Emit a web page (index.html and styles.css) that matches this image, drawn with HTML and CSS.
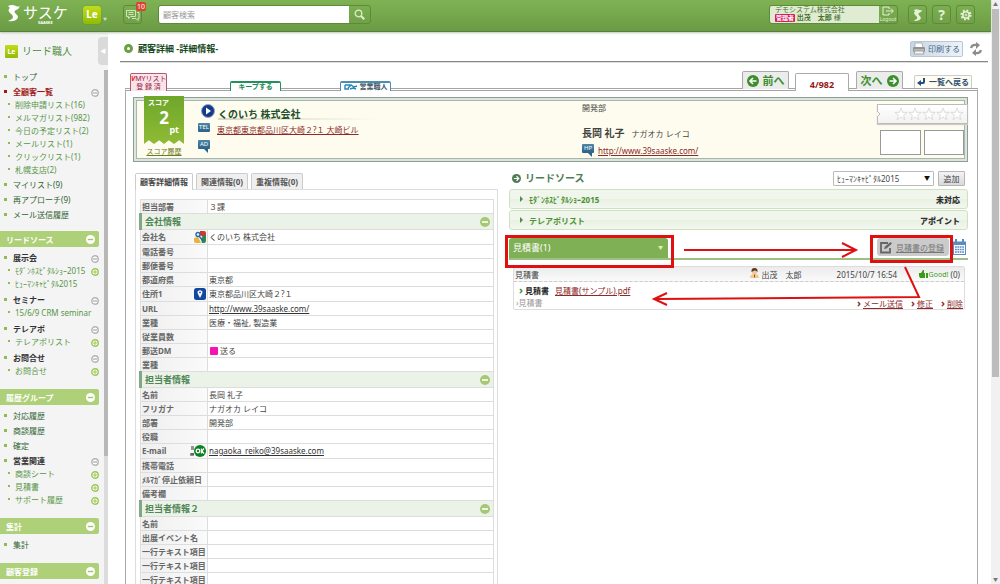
FILE: index.html
```html
<!DOCTYPE html>
<html lang="ja">

<head>
    <meta charset="UTF-8">
    <meta name="viewport" content="width=device-width, initial-scale=1.0">
    <title>顧客詳細 -詳細情報-</title>
    <link rel="stylesheet" href="styles.css">
</head>

<body>
    <!-- Shared icons -->
    <svg class="sprites" aria-hidden="true">
        <symbol id="ninja" viewBox="0 0 14 18">
            <path d="M1 2 Q5 0 9 2 Q11 3 13 2 Q12 5 9 6 Q6 7 9 10 Q13 13 9 16 Q5 18 1 17 Q6 15 6 13 Q6 11 3 9 Q0 6 3 4 Z" fill="currentColor" />
        </symbol>
        <symbol id="minus" viewBox="0 0 10 10">
            <circle cx="5" cy="5" r="5" fill="currentColor" />
            <path d="M2 5h6" stroke="var(--bar, #fff)" stroke-width="1.6" />
        </symbol>
        <symbol id="minus-line" viewBox="0 0 8 8">
            <circle cx="4" cy="4" r="3.2" fill="#fff" stroke="currentColor" stroke-width="1.4" />
            <path d="M2 4h4" stroke="currentColor" stroke-width="1.4" />
        </symbol>
        <symbol id="plus-line" viewBox="0 0 8 8">
            <circle cx="4" cy="4" r="3.2" fill="#fff" stroke="currentColor" stroke-width="1.4" />
            <path d="M2 4h4M4 2v4" stroke="currentColor" />
        </symbol>
        <symbol id="go" viewBox="0 0 12 12">
            <circle cx="6" cy="6" r="6" fill="currentColor" />
            <path d="M2.5 6h6M6 3l3 3-3 3" fill="none" stroke="#fff" stroke-width="1.6" />
        </symbol>
        <symbol id="star" viewBox="0 0 14 14">
            <path d="M7 1l1.6 4.3 4.6.1-3.6 2.8 1.3 4.4L7 10l-3.9 2.6 1.3-4.4L.8 5.4l4.6-.1z" fill="#fff" stroke="#d4d4d4" stroke-width=".8" />
        </symbol>
    </svg>

    <div class="window">
        <header class="topbar">
            <a href="#" class="logo" aria-label="サスケ">
                <svg class="logo-mark"><use href="#ninja" /></svg>
                <span class="logo-name">サスケ<small>SAASKE</small></span>
            </a>
            <button type="button" class="product">Le</button>
            <span class="caret">▼</span>
            <button type="button" class="bar-button messages" aria-label="メッセージ">
                <svg width="14" height="12" viewBox="0 0 14 12" fill="none" stroke="#cfe6b8">
                    <path d="M.5 1.5h9v6h-5l-2 2v-2h-2zM2.5 3.5h5M2.5 5.5h5" />
                    <path d="M11 3.5h2v6h-1v2l-2-2H6" />
                </svg>
                <span class="count">10</span>
            </button>
            <form class="search">
                <input type="text" placeholder="顧客検索" aria-label="顧客検索">
                <button type="button" aria-label="検索">
                    <svg width="11" height="11" viewBox="0 0 11 11" fill="none" stroke="#dceec8">
                        <circle cx="4.5" cy="4.5" r="3.3" stroke-width="1.3" />
                        <path d="M7 7l3.3 3.3" stroke-width="2" />
                    </svg>
                </button>
            </form>
            <div class="account">
                <div class="account-info">
                    <div>デモシステム株式会社</div>
                    <div><span class="role">管理者</span> <b>出茂　太郎</b> 様</div>
                </div>
                <button type="button" class="logout">
                    <svg width="12" height="10" viewBox="0 0 12 10" fill="none" stroke="#e4f2d6">
                        <path d="M7 3V1H1v8h6V7M4 5h7M9 2.5L11.3 5 9 7.5" />
                    </svg>
                    Logout
                </button>
            </div>
            <button type="button" class="bar-button" aria-label="サスケ"><svg width="10" height="14"><use href="#ninja" /></svg></button>
            <button type="button" class="bar-button help">?</button>
            <button type="button" class="bar-button" aria-label="設定">
                <svg width="12" height="12" viewBox="0 0 12 12" fill="none" stroke="currentColor">
                    <circle cx="6" cy="6" r="4.6" stroke-width="2" stroke-dasharray="1.8 1.8" />
                    <circle cx="6" cy="6" r="3.2" stroke-width="1.6" />
                    <circle cx="6" cy="6" r="1" />
                </svg>
            </button>
        </header>

        <div class="page">
            <aside class="sidebar">
                <button type="button" class="collapse" aria-label="閉じる">◀</button>
                <a href="#" class="side-title"><span class="le">Le</span>リード職人</a>
                <div class="side-scroll">
                    <nav class="side-menu">
                        <ul class="first">
                            <li><a href="#">トップ</a></li>
                            <li class="current"><a href="#">全顧客一覧</a><svg class="fold"><use href="#minus-line" /></svg>
                                <ul>
                                    <li><a href="#">削除申請リスト(16)</a></li>
                                    <li><a href="#">メルマガリスト(982)</a></li>
                                    <li><a href="#">今日の予定リスト(2)</a></li>
                                    <li><a href="#">メールリスト(1)</a></li>
                                    <li><a href="#">クリックリスト(1)</a></li>
                                    <li><a href="#">札幌支店(2)</a></li>
                                </ul>
                            </li>
                            <li><a href="#">マイリスト(9)</a></li>
                            <li><a href="#">再アプローチ(9)</a></li>
                            <li><a href="#">メール送信履歴</a></li>
                        </ul>
                        <h2>リードソース<svg><use href="#minus" /></svg></h2>
                        <ul>
                            <li class="group"><a href="#">展示会</a><svg class="fold"><use href="#minus-line" /></svg>
                                <ul>
                                    <li><a href="#">ﾓﾀﾞﾝﾎｽﾋﾟﾀﾙｼｮｰ2015</a><svg class="add"><use href="#plus-line" /></svg></li>
                                    <li><a href="#">ﾋｭｰﾏﾝｷｬﾋﾟﾀﾙ2015</a></li>
                                </ul>
                            </li>
                            <li class="group"><a href="#">セミナー</a><svg class="fold"><use href="#minus-line" /></svg>
                                <ul>
                                    <li><a href="#">15/6/9 CRM seminar</a></li>
                                </ul>
                            </li>
                            <li class="group"><a href="#">テレアポ</a><svg class="fold"><use href="#minus-line" /></svg>
                                <ul>
                                    <li><a href="#">テレアポリスト</a><svg class="add"><use href="#plus-line" /></svg></li>
                                </ul>
                            </li>
                            <li class="group"><a href="#">お問合せ</a><svg class="fold"><use href="#minus-line" /></svg>
                                <ul>
                                    <li><a href="#">お問合せ</a><svg class="add"><use href="#plus-line" /></svg></li>
                                </ul>
                            </li>
                        </ul>
                        <h2>履歴グループ<svg><use href="#minus" /></svg></h2>
                        <ul>
                            <li><a href="#">対応履歴</a></li>
                            <li><a href="#">商談履歴</a></li>
                            <li><a href="#">確定</a></li>
                            <li class="group"><a href="#">営業関連</a><svg class="fold"><use href="#minus-line" /></svg>
                                <ul>
                                    <li><a href="#">商談シート</a><svg class="add"><use href="#plus-line" /></svg></li>
                                    <li><a href="#">見積書</a><svg class="add"><use href="#plus-line" /></svg></li>
                                    <li><a href="#">サポート履歴</a><svg class="add"><use href="#plus-line" /></svg></li>
                                </ul>
                            </li>
                        </ul>
                        <h2>集計<svg><use href="#minus" /></svg></h2>
                        <ul>
                            <li><a href="#">集計</a></li>
                        </ul>
                        <h2>顧客登録<svg><use href="#minus" /></svg></h2>
                    </nav>
                    <div class="side-track"><div class="side-thumb"></div></div>
                </div>
            </aside>

            <main>
                <div class="title-row">
                    <h1><span class="ring"></span>顧客詳細 -詳細情報-</h1>
                    <button type="button" class="print">
                        <svg width="14" height="13" viewBox="0 0 14 13">
                            <path d="M3 1h7l1 5H3z" fill="#fff" stroke="#9aa7b5" stroke-width=".8" />
                            <rect x="1" y="5" width="12" height="5" rx="1" fill="#8f9499" />
                            <path d="M2 8h10" stroke="#e6dcc6" />
                            <path d="M3 9h8l1 3H2z" fill="#f4f4f4" stroke="#999" stroke-width=".8" />
                        </svg>
                        印刷する
                    </button>
                    <button type="button" class="refresh" aria-label="更新">
                        <svg width="14" height="14" viewBox="0 0 14 14" fill="none" stroke="#8c8c8c" stroke-width="2.2">
                            <path d="M2 6 Q3 2 8 3" /><path d="M12 8 Q11 12 6 11" />
                            <path d="M7 0l4 3-4 4zM7 14l-4-3 4-4z" fill="#8c8c8c" stroke="none" />
                        </svg>
                    </button>
                </div>

                <nav class="tabs">
                    <a href="#" class="tab my-list"><span><i>V</i>MYリスト</span><span>登 録 済</span></a>
                    <a href="#" class="tab keep">キープする</a>
                    <a href="#" class="tab sales">
                        <svg width="14" height="8" viewBox="0 0 14 8" fill="none" stroke="#2a86b8">
                            <path d="M1 2h5M1 2v4h4M4 5l3-3 3 2 3-1M6 6l3-1 3 1" stroke-width="1.4" />
                        </svg>営業職人</a>
                    <a href="#" class="tab pager prev"><svg class="flip"><use href="#go" /></svg>前へ</a>
                    <span class="tab position">4/982</span>
                    <a href="#" class="tab pager next">次へ<svg><use href="#go" /></svg></a>
                    <a href="#" class="tab back">
                        <svg width="8" height="8" viewBox="0 0 8 8"><path d="M7 0v4q0 1-1 1H3" fill="none" stroke="#1f4e86" stroke-width="2" /><path d="M0 5l4-3v6z" fill="#1f4e86" /></svg>一覧へ戻る</a>
                </nav>

                <div class="panel">
                    <section class="summary">
                        <div class="score">
                            <div class="ribbon"><span>スコア</span><strong>2</strong><em>pt</em></div>
                            <a href="#">スコア履歴</a>
                        </div>
                        <div class="company">
                            <div class="company-name">
                                <svg width="14" height="14" viewBox="0 0 14 14">
                                    <circle cx="7" cy="7" r="6.5" fill="#163a86" stroke="#8fa6cf" />
                                    <path d="M5 3.5l5 3.5-5 3.5z" fill="#fff" />
                                </svg>
                                <h2>くのいち 株式会社</h2>
                            </div>
                            <div class="contact"><span class="chip">TEL</span><a href="#">東京都東京都品川区大崎２?１ 大崎ビル</a></div>
                            <div class="contact"><span class="chip bubble">AD</span></div>
                        </div>
                        <div class="person">
                            <p>開発部</p>
                            <div class="person-name"><strong>長岡 礼子</strong>ナガオカ レイコ</div>
                            <div class="contact"><span class="chip bubble">HP</span><a href="#">http://www.39saaske.com/</a></div>
                        </div>
                        <div class="rating">
                            <div class="stars">
                                <svg class="notch" viewBox="0 0 4 6"><path d="M0 0l3 3-3 3" fill="#fefcee" stroke="#bbb" /></svg>
                                <svg><use href="#star" /></svg><svg><use href="#star" /></svg><svg><use href="#star" /></svg><svg><use href="#star" /></svg><svg><use href="#star" /></svg>
                            </div>
                            <div class="photos"><div></div><div></div></div>
                        </div>
                    </section>

                    <div class="columns">
                        <section class="detail">
                            <nav class="detail-tabs">
                                <a href="#" class="active">顧客詳細情報</a>
                                <a href="#">関連情報(0)</a>
                                <a href="#">重複情報(0)</a>
                            </nav>
                            <div class="detail-body">
                                <table>
                                    <tr><th>担当部署</th><td>３課</td></tr>
                                    <tr class="section"><th colspan="2"><div>会社情報<svg><use href="#minus" /></svg></div></th></tr>
                                    <tr class="tall"><th><div>会社名
                                        <svg width="12" height="12" viewBox="0 0 12 12">
                                            <rect width="12" height="12" rx="2" fill="#f4f6f2" />
                                            <path d="M6 0h4q2 0 2 2v3L9 6 6 4z" fill="#cf3a2c" />
                                            <path d="M9 5l3-1v6q0 2-2 2H8L7 8z" fill="#2b8a44" />
                                            <path d="M0 7l4-1 3 6H2q-2 0-2-2z" fill="#e8b33a" />
                                            <circle cx="4" cy="3.5" r="2" fill="none" stroke="#2c62b0" stroke-width="1.4" />
                                            <path d="M5 5l4 5" stroke="#2c62b0" stroke-width="1.4" />
                                        </svg></div></th><td>くのいち 株式会社</td></tr>
                                    <tr><th>電話番号</th><td></td></tr>
                                    <tr><th>郵便番号</th><td></td></tr>
                                    <tr><th>都道府県</th><td>東京都</td></tr>
                                    <tr class="tall"><th><div>住所1
                                        <svg width="12" height="12" viewBox="0 0 12 12">
                                            <rect width="12" height="12" rx="2.5" fill="#1247a0" />
                                            <path d="M6 10L3.8 5.5a2.4 2.4 0 1 1 4.4 0z" fill="#fff" />
                                            <circle cx="6" cy="4.4" r=".9" fill="#1247a0" />
                                        </svg></div></th><td>東京都品川区大崎２?１</td></tr>
                                    <tr><th>URL</th><td><a href="#">http://www.39saaske.com/</a></td></tr>
                                    <tr><th>業種</th><td>医療・福祉, 製造業</td></tr>
                                    <tr><th>従業員数</th><td></td></tr>
                                    <tr><th>郵送DM</th><td><span class="swatch"></span>送る</td></tr>
                                    <tr><th>業種</th><td></td></tr>
                                    <tr class="section"><th colspan="2"><div>担当者情報<svg><use href="#minus" /></svg></div></th></tr>
                                    <tr><th>名前</th><td>長岡 礼子</td></tr>
                                    <tr><th>フリガナ</th><td>ナガオカ レイコ</td></tr>
                                    <tr><th>部署</th><td>開発部</td></tr>
                                    <tr><th>役職</th><td></td></tr>
                                    <tr class="tall"><th><div>E-mail
                                        <svg width="16" height="12" viewBox="0 0 16 12">
                                            <path d="M1 2h3M1 4h3M1 8v3M3 8v3M1 9h3" stroke="#333" />
                                            <circle cx="10" cy="6" r="6" fill="#0b8020" />
                                            <circle cx="8" cy="6" r="1.8" fill="none" stroke="#fff" stroke-width="1.3" />
                                            <path d="M11.4 3.5v5M14 3.5L11.8 6 14 8.5" fill="none" stroke="#fff" stroke-width="1.2" />
                                        </svg></div></th><td><a href="#">nagaoka_reiko@39saaske.com</a></td></tr>
                                    <tr><th>携帯電話</th><td></td></tr>
                                    <tr><th>ﾒﾙﾏｶﾞ停止依頼日</th><td></td></tr>
                                    <tr><th>備考欄</th><td></td></tr>
                                    <tr class="section"><th colspan="2"><div>担当者情報２<svg><use href="#minus" /></svg></div></th></tr>
                                    <tr><th>名前</th><td></td></tr>
                                    <tr><th>出展イベント名</th><td></td></tr>
                                    <tr><th>一行テキスト項目</th><td></td></tr>
                                    <tr><th>一行テキスト項目</th><td></td></tr>
                                    <tr><th>一行テキスト項目</th><td></td></tr>
                                </table>
                            </div>
                        </section>

                        <section class="sources">
                            <div class="source-head">
                                <h2><svg><use href="#go" /></svg>リードソース</h2>
                                <div class="select">
                                    <select aria-label="リードソース">
                                        <option>ﾋｭｰﾏﾝｷｬﾋﾟﾀﾙ2015</option>
                                    </select>
                                </div>
                                <button type="button" class="add-button">追加</button>
                            </div>
                            <a href="#" class="source"><span>ﾓﾀﾞﾝﾎｽﾋﾟﾀﾙｼｮｰ2015</span><b>未対応</b></a>
                            <a href="#" class="source"><span>テレアポリスト</span><b>アポイント</b></a>

                            <div class="estimate-head">
                                <button type="button" class="estimate-tab">見積書(1)<span>▼</span></button>
                                <a href="#" class="register">
                                    <svg width="14" height="13" viewBox="0 0 14 13" fill="none" stroke="#666" stroke-width="1.8">
                                        <path d="M9 2H2v9.5h9V7" /><path d="M5 8l1-2.5L11.5 1 13 2.5 7.5 7.5z" fill="#666" stroke="none" />
                                    </svg><span>見積書の登録</span></a>
                                <a href="#" class="calendar" aria-label="カレンダー">
                                    <svg width="13" height="16" viewBox="0 0 13 16">
                                        <rect x=".5" y="3" width="12" height="12.5" fill="#fff" stroke="#5b8cc0" />
                                        <path d="M0 3h13v3H0z" fill="#5b8cc0" />
                                        <path d="M3 0v4M10 0v4" stroke="#5b8cc0" stroke-width="2" />
                                        <path d="M2 8h9M2 10.5h9M2 13h9" stroke="#5b8cc0" stroke-width="1.5" stroke-dasharray="1.8 .6" />
                                    </svg>
                                </a>
                            </div>

                            <article class="record">
                                <div class="record-head">
                                    <span class="kind">見積書</span>
                                    <span class="owner">
                                        <svg width="9" height="10" viewBox="0 0 9 10">
                                            <path d="M0 10q0-4 4.5-4T9 10z" fill="#e9cf8a" />
                                            <circle cx="4.5" cy="4" r="2.6" fill="#f3c9a0" />
                                            <path d="M1.5 4Q1 0 4.5 0T7.5 4Q6 2 4.5 2.5T1.5 4z" fill="#5a3a22" />
                                            <path d="M4.5 6.5v3" stroke="#c33" />
                                        </svg>出茂　太郎</span>
                                    <time>2015/10/7 16:54</time>
                                    <span class="good">
                                        <svg width="9" height="8" viewBox="0 0 9 8" fill="#3c9a1c"><path d="M0 3h2l2-3 1 0v3h1v5H1L0 6zM7 3h2v5H7z" /></svg>Good!</span>
                                    <span>(0)</span>
                                </div>
                                <div class="record-body">
                                    <p><span class="arrow">›</span><b>見積書</b><a href="#">見積書(サンプル).pdf</a></p>
                                    <div class="record-foot">
                                        <span class="muted">›見積書</span>
                                        <span class="actions"><a href="#">メール送信</a><a href="#">修正</a><a href="#">削除</a></span>
                                    </div>
                                </div>
                            </article>

                            <!-- Red guide marks over the estimate area -->
                            <svg class="guide" width="465" height="80" viewBox="505 232 465 80" fill="none" stroke="#e01010">
                                <rect x="506.5" y="236.5" width="166" height="30" stroke-width="3" />
                                <rect x="871.5" y="236.5" width="80" height="25" stroke-width="3" />
                                <path d="M684 250h172M842 243l14 7-14 7" stroke-width="2" />
                                <path d="M905 267l14 30-264 2M667 293l-13 6 13 6" stroke-width="2" />
                            </svg>
                        </section>
                    </div>
                </div>
            </main>
        </div>
    </div>
    <div class="scrollbar"><span>▲</span><div class="thumb"></div><span>▼</span></div>
</body>

</html>
```
FILE: styles.css
```css
/* Global Styles */
* {
    box-sizing: border-box;
}

body {
    margin: 0;
    display: flex;
    height: 100vh;
    overflow: hidden;
    background-color: #fff;
    color: #444;
    font-family: "Noto Sans", "Noto Sans CJK JP", sans-serif;
    font-size: 8px;
    line-height: 13px;
}

h1, h2, p, ul {
    margin: 0;
    padding: 0;
}

ul {
    list-style: none;
}

a {
    color: inherit;
    text-decoration: none;
}

button, input, select {
    font: inherit;
    color: inherit;
    margin: 0;
    padding: 0;
    border: none;
    background: none;
}

svg {
    flex: none;
}

.sprites {
    position: absolute;
    width: 0;
    height: 0;
}

.window {
    flex: 1;
    min-width: 0;
    display: flex;
    flex-direction: column;
}

/* Top Bar */
.topbar {
    flex: none;
    height: 32px;
    display: flex;
    align-items: center;
    padding: 0 16px 2px 7px;
    background: linear-gradient(#7fb254, #6b9b44);
    border-bottom: 1px solid #57803a;
    box-shadow: 0 1px 2px #b9c9ae;
    color: #fff;
    z-index: 1;
}

.logo {
    display: flex;
    gap: 2px;
    width: 76px;
}

.logo-mark {
    width: 14px;
    height: 18px;
}

.logo-name {
    font-size: 15px;
    line-height: 16px;
}

.logo-name small {
    display: block;
    font-size: 4px;
    line-height: 5px;
    font-weight: bold;
    text-align: center;
}

.product, .le {
    background: linear-gradient(#c4dc18, #8fbc04);
    border-radius: 3px;
    color: #fff;
    font-weight: bold;
    text-align: center;
}

.product {
    width: 18px;
    height: 18px;
    font-size: 10px;
    box-shadow: 0 0 1px #4c7426;
}

.caret {
    width: 22px;
    padding: 10px 0 0 2px;
    font-size: 4px;
    line-height: 4px;
    color: #cfe0c0;
}

.bar-button {
    width: 19px;
    height: 19px;
    margin-left: 5px;
    display: flex;
    align-items: center;
    justify-content: center;
    border: 1px solid #5d8b3a;
    border-radius: 3px;
    color: #e4f2d6;
}

.messages {
    position: relative;
    margin-left: 0;
}

.count {
    position: absolute;
    top: -4px;
    right: -5px;
    padding: 0 1px;
    border-radius: 2px;
    background-color: #d8452e;
    color: #fff;
    font-size: 7px;
    line-height: 9px;
}

.help {
    font-size: 14px;
    font-weight: bold;
}

.search {
    display: flex;
    height: 19px;
    margin-left: 16px;
    border: 1px solid #5d8b3a;
    border-radius: 3px;
}

.search input {
    width: 190px;
    padding: 0 4px;
    background-color: #fff;
    border-radius: 2px 0 0 2px;
    color: #444;
}

.search input::placeholder {
    color: #999;
}

.search button {
    width: 21px;
    display: flex;
    align-items: center;
    justify-content: center;
}

.account {
    display: flex;
    height: 19px;
    margin: 0 5px 0 auto;
    border: 1px solid #5d8b3a;
    border-radius: 3px;
}

.account-info {
    width: 109px;
    padding-left: 5px;
    background-color: #dfecd2;
    border-radius: 2px 0 0 2px;
    color: #47712a;
    font-size: 7px;
    line-height: 8px;
}

.role {
    padding: 0 1px;
    border-radius: 1px;
    background-color: #d81b60;
    color: #fff;
    font-size: 6px;
    font-weight: bold;
}

.logout {
    width: 18px;
    display: flex;
    flex-direction: column;
    align-items: center;
    font-size: 5px;
    line-height: 6px;
    color: #e4f2d6;
}

.page {
    flex: 1;
    min-height: 0;
    display: flex;
}

/* Sidebar */
.sidebar {
    position: relative;
    flex: none;
    width: 108px;
    display: flex;
    flex-direction: column;
    background-color: #f4f4f4;
    color: #2e6332;
}

.collapse {
    position: absolute;
    top: 5px;
    right: 0;
    width: 10px;
    height: 28px;
    border-radius: 4px 0 0 4px;
    background-color: #dadada;
    color: #fff;
    font-size: 6px;
}

.side-title {
    display: flex;
    align-items: center;
    gap: 4px;
    height: 38px;
    padding-left: 5px;
    font-size: 10px;
    color: #4d8c3c;
}

.le {
    width: 13px;
    height: 13px;
    border-radius: 1px;
    font-size: 7px;
}

.side-scroll {
    flex: 1;
    min-height: 0;
    display: flex;
}

.side-menu {
    flex: 1;
    overflow: hidden;
}

.side-track {
    width: 4px;
    background-color: #dcdcdc;
}

.side-thumb {
    height: 75%;
    background-color: #b7b7b7;
}

.side-menu > ul {
    padding: 4px 5px 10px 0;
}

.side-menu > .first {
    padding-top: 0;
    padding-bottom: 8px;
}

.side-menu li {
    position: relative;
    padding-left: 13px;
    margin-bottom: 2px;
}

.side-menu .group + .group {
    margin-top: 3px;
}

.side-menu li::before {
    content: "";
    position: absolute;
    left: 4px;
    top: 5px;
    width: 3px;
    height: 3px;
    background-color: #8fbc50;
}

.side-menu li li {
    padding-left: 2px;
    margin-bottom: 0;
    color: #589448;
}

.side-menu li li::before {
    left: -5px;
    width: 2px;
    height: 2px;
}

.side-menu .current > a {
    color: #a01818;
    font-weight: bold;
}

.side-menu .current::before {
    background-color: #a01818;
}

.side-menu .group > a {
    color: #333;
    font-weight: bold;
}

.fold, .add {
    position: absolute;
    top: 4px;
    right: 0;
    width: 8px;
    height: 8px;
    color: #b4b4b4;
}

.add {
    color: #9cc653;
}

.side-menu h2 {
    display: flex;
    align-items: center;
    justify-content: space-between;
    height: 16px;
    margin: 0 5px 0 0;
    padding: 0 4px 0 6px;
    border-radius: 0 2px 2px 0;
    background-color: #aed078;
    color: #fff;
    font-size: 8px;
}

.side-menu h2 svg {
    width: 9px;
    height: 9px;
    --bar: #a3c668;
}

/* Main Area */
main {
    flex: 1;
    min-width: 0;
    padding: 4px 3px 0 12px;
}

.title-row {
    display: flex;
    align-items: center;
    height: 26px;
    padding-right: 5px;
    border-bottom: 1px solid #888;
    box-shadow: 0 1px 0 #ddd;
}

h1 {
    display: flex;
    align-items: center;
    gap: 5px;
    margin-right: auto;
    padding: 4px;
    font-size: 9px;
    color: #174a22;
}

.ring {
    width: 9px;
    height: 9px;
    border: 3px solid #6ba043;
    border-radius: 50%;
}

.print {
    display: flex;
    align-items: center;
    gap: 2px;
    height: 16px;
    padding: 0 2px 0 1px;
    border: 1px solid #b9c6d3;
    border-radius: 2px;
    background: linear-gradient(90deg, #c9d6e2, #eef3f8);
    color: #42658c;
}

.refresh {
    display: flex;
    margin-left: 6px;
}

/* Tabs above the panel */
.tabs {
    position: relative;
    display: flex;
    align-items: flex-end;
    height: 29px;
    margin: 0 16px -3px 5px;
    padding-left: 5px;
}

.tab {
    border: 1px solid #aaa;
    border-bottom: none;
    border-radius: 2px 2px 0 0;
    background-color: #fff;
    font-weight: bold;
}

.my-list {
    width: 37px;
    padding-top: 1px;
    border-color: #b35a72;
    background-color: #fbe3ea;
    color: #92243f;
    font-size: 7px;
    line-height: 8px;
    font-weight: normal;
}

.my-list span {
    display: block;
    text-align: center;
    white-space: nowrap;
}

.my-list i {
    color: #d22;
    font-weight: bold;
}

.keep, .sales {
    width: 51px;
    height: 10px;
    margin-left: 63px;
    border-color: #239060;
    border-top-width: 2px;
    color: #1c8a55;
    font-size: 7px;
    line-height: 8px;
    text-align: center;
}

.sales {
    display: flex;
    justify-content: center;
    gap: 2px;
    margin-left: 59px;
    border-color: #4d8eae;
    color: #44586a;
}

.pager {
    display: flex;
    align-items: center;
    justify-content: center;
    gap: 4px;
    width: 47px;
    height: 18px;
    margin-bottom: 2px;
    background-color: #ececec;
    color: #3c8f2c;
    font-size: 11px;
}

.pager svg {
    width: 12px;
    height: 12px;
}

.flip {
    transform: rotate(180deg);
}

.prev {
    margin-left: auto;
}

.position {
    width: 54px;
    height: 18px;
    margin: 0 7px 0 6px;
    color: #961818;
    font-size: 9px;
    line-height: 22px;
    text-align: center;
}

.back {
    display: flex;
    align-items: center;
    justify-content: center;
    gap: 4px;
    width: 58px;
    height: 13px;
    margin: 0 0 3px 11px;
    background-color: #fffdf2;
    border-color: #ccc;
    color: #2e5070;
    line-height: 12px;
    white-space: nowrap;
}

/* Panel */
.panel {
    margin: 0 10px 0 5px;
    padding: 6px 9px 0 7px;
    border: 1px solid #aaa;
    border-top: 3px double #a4a4a4;
    border-bottom: none;
}

.summary {
    display: grid;
    grid-template-columns: 54px 383fr 296fr 90px;
    height: 65px;
    padding-left: 10px;
    border: 1px solid #8e9e92;
    box-shadow: inset 0 0 0 2px #dce5dd, inset 0 0 0 3px #a9b6ab;
    background-color: #fefcee;
}

.score {
    width: 40px;
    text-align: center;
}

.score a {
    color: #6d7a1d;
    font-size: 7px;
    text-decoration: underline;
}

.ribbon {
    display: flex;
    flex-direction: column;
    height: 48px;
    margin-top: -2px;
    background: linear-gradient(#6ea62a, #8fbb35);
    clip-path: polygon(0 0, 100% 0, 100% 100%, 88% 92%, 75% 100%, 62% 92%, 50% 100%, 38% 92%, 25% 100%, 12% 92%, 0 100%);
    color: #fff;
}

.ribbon span {
    padding-left: 4px;
    font-size: 7px;
    font-weight: bold;
    text-align: left;
}

.ribbon strong {
    font-size: 17px;
    line-height: 17px;
}

.ribbon em {
    padding-right: 5px;
    font-size: 9px;
    line-height: 8px;
    font-style: normal;
    font-weight: bold;
    text-align: right;
}

.company {
    padding-top: 6px;
}

.company-name {
    display: flex;
    gap: 3px;
    padding-left: 3px;
}

.company-name h2 {
    width: 160px;
    height: 16px;
    padding-top: 4px;
    font-size: 10px;
    color: #24502b;
    border-bottom: 2px solid transparent;
    border-image: linear-gradient(90deg, #d5d8c4, #fefcee) 1;
}

.contact {
    display: flex;
    align-items: flex-start;
    gap: 7px;
    height: 14px;
    margin-top: 3px;
}

.contact a {
    color: #8c2929;
    text-decoration: underline;
}

.chip {
    position: relative;
    width: 12px;
    height: 9px;
    background: linear-gradient(#4d86a5, #2b638a);
    border-radius: 1px;
    color: #fff;
    font-size: 6px;
    line-height: 9px;
    text-align: center;
}

.bubble::after {
    content: "";
    position: absolute;
    top: 9px;
    left: 6px;
    border: 2px solid transparent;
    border-top-color: #2b638a;
    border-right-color: #2b638a;
}

.person {
    padding: 3px 0 0 1px;
}

.person-name {
    padding-top: 12px;
    line-height: 14px;
}

.person-name strong {
    margin-right: 7px;
    font-size: 10px;
}

.person .contact {
    gap: 4px;
}

.rating {
    margin-right: -1px;
    padding-top: 6px;
}

.stars {
    display: flex;
    align-items: center;
    justify-content: flex-end;
    height: 20px;
    padding-right: 3px;
    border: 1px solid #bbb;
    background: linear-gradient(#fff, #f2f2f2);
    box-shadow: 0 1px 1px #ccc;
}

.stars svg {
    width: 14px;
    height: 14px;
}

.stars .notch {
    width: 4px;
    height: 6px;
    margin: 0 auto 0 -1px;
}

.photos {
    display: flex;
    gap: 3px;
    padding: 6px 4px 0 3px;
}

.photos div {
    flex: 1;
    height: 25px;
    border: 1px solid #999;
    background-color: #fff;
}

.columns {
    display: grid;
    grid-template-columns: 363fr 459fr;
    gap: 11px;
    padding: 5px 0 0 2px;
}

/* Customer Detail */
.detail {
    padding-top: 6px;
}

.detail-tabs {
    display: flex;
    gap: 3px;
}

.detail-tabs a {
    height: 16px;
    padding: 1px 4px 0;
    border: 1px solid #ccc;
    border-bottom: none;
    border-radius: 2px 2px 0 0;
    background-color: #efefef;
    color: #555;
    font-weight: bold;
}

.detail-tabs .active {
    height: 17px;
    margin-bottom: -1px;
    background-color: #fff;
    color: #444;
}

.detail-body {
    padding: 9px 3px 0;
    border: 1px solid #ddd;
    border-bottom: none;
}

.detail table {
    width: 100%;
    border-collapse: collapse;
    border: 1px solid #ddd;
}

.detail th, .detail td {
    height: 14px;
    padding: 0 1px;
    border: 1px solid #ddd;
    line-height: 12px;
    text-align: left;
    white-space: nowrap;
}

.detail th {
    width: 67px;
    background: linear-gradient(90deg, #eeefee, #fafafa);
    color: #666;
}

.detail td a {
    color: #333;
    text-decoration: underline;
}

.detail .tall th, .detail .tall td {
    height: 15px;
}

.detail th div {
    display: flex;
    align-items: center;
    justify-content: space-between;
}

.detail .section th {
    height: 16px;
    padding: 0 3px;
    border-left: 3px solid #80a883;
    background: #ebf3e8;
    color: #508556;
    font-size: 9px;
}

.section svg {
    width: 10px;
    height: 10px;
    color: #a7c774;
}

.swatch {
    display: inline-block;
    width: 8px;
    height: 8px;
    margin: 0 2px 0 1px;
    border-radius: 1px;
    background-color: #f413b5;
    vertical-align: -1px;
}

/* Lead Sources */
.sources {
    position: relative;
}

.source-head {
    display: flex;
    align-items: center;
    height: 22px;
    padding-right: 3px;
}

.source-head h2 {
    display: flex;
    align-items: center;
    gap: 4px;
    margin-right: auto;
    padding-left: 3px;
    font-size: 10px;
    color: #4f7d53;
}

.source-head h2 svg {
    width: 9px;
    height: 9px;
}

.select {
    position: relative;
}

.select::after {
    content: "▼";
    position: absolute;
    right: 4px;
    top: 1px;
    font-size: 6px;
    color: #111;
    pointer-events: none;
}

.select select {
    display: block;
    appearance: none;
    width: 101px;
    height: 15px;
    padding-left: 3px;
    border: 1px solid #bbb;
    border-radius: 1px;
    background-color: #fff;
}

.add-button {
    width: 27px;
    height: 15px;
    margin-left: 4px;
    border: 1px solid #b5b5b5;
    border-radius: 1px;
    background: linear-gradient(#f4f4f4, #d9d9d9);
}

.source {
    display: flex;
    align-items: center;
    height: 20px;
    margin-bottom: 1px;
    padding: 0 7px 0 10px;
    border: 1px solid #cde3bf;
    border-radius: 3px;
    background: linear-gradient(#f1f6ec 50%, #e9f1e2 50%, #f3f7f0);
    color: #4d9135;
    font-weight: bold;
}

.source::before {
    content: "";
    margin-right: 6px;
    border: 3px solid transparent;
    border-left-color: #4d8c4f;
    border-right: none;
}

.source b {
    margin-left: auto;
    color: #333;
}

.estimate-head {
    display: flex;
    align-items: flex-end;
    margin-top: 8px;
    border-bottom: 2px solid #9cc083;
}

.estimate-tab {
    display: flex;
    justify-content: space-between;
    width: 159px;
    height: 20px;
    margin-right: auto;
    padding: 0 5px 1px 4px;
    border-radius: 3px 3px 0 0;
    background-color: #7fb055;
    color: #fff;
    font-size: 9px;
    line-height: 19px;
}

.estimate-tab span {
    color: #e2f29a;
    font-size: 5px;
}

.register {
    display: flex;
    align-items: center;
    gap: 3px;
    height: 18px;
    margin: 0 4px 2px 0;
    padding: 0 5px 0 2px;
    border-radius: 3px;
    background-color: #cbcbcb;
    color: #777;
}

.register span {
    text-decoration: underline;
}

.calendar {
    display: flex;
    margin: 0 2px 3px 0;
}

.record {
    margin: 6px 3px 0 4px;
    border: 1px solid #ddd;
    border-radius: 2px;
}

.record-head {
    display: flex;
    align-items: center;
    height: 15px;
    padding: 0 4px 0 1px;
    border-bottom: 1px dashed #ccc;
    background: linear-gradient(#ececec, #fafafa);
}

.kind {
    margin-right: auto;
}

.owner {
    display: flex;
    gap: 3px;
    width: 87px;
}

.record-head time {
    width: 82px;
}

.good {
    display: flex;
    align-items: center;
    gap: 1px;
    width: 32px;
    color: #3c9a1c;
    font-size: 7px;
}

.record-body {
    padding: 1px 1px 0 2px;
}

.record-body p {
    padding-left: 3px;
}

.record-body b {
    margin: 0 6px 0 2px;
    color: #222;
}

.record-body a {
    color: #8c2929;
    text-decoration: underline;
}

.arrow {
    color: #3c8f3c;
    font-size: 11px;
    font-weight: bold;
}

.record-foot {
    display: flex;
    justify-content: space-between;
    line-height: 11px;
}

.muted {
    color: #999;
}

.actions {
    display: flex;
    gap: 8px;
}

.actions a::before {
    content: "›";
    display: inline-block;
    width: 6px;
    font-size: 11px;
    font-weight: bold;
}

.guide {
    position: absolute;
    top: 65px;
    left: -4px;
}

/* Window Scrollbar */
.scrollbar {
    flex: none;
    width: 9px;
    display: flex;
    flex-direction: column;
    align-items: center;
    background-color: #f1f1f1;
    color: #777;
    font-size: 5px;
    line-height: 9px;
}

.thumb {
    width: 7px;
    height: 63%;
    margin-bottom: auto;
    background-color: #bcbcbc;
}
```
